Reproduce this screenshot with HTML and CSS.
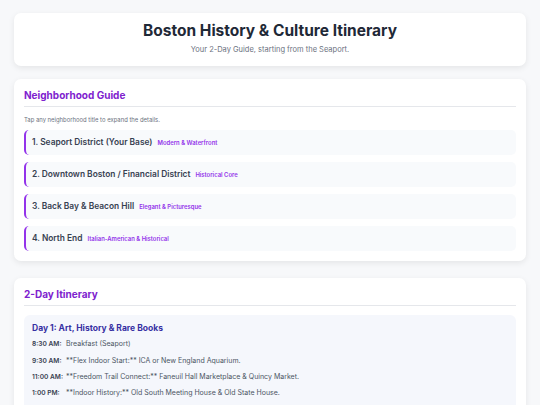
FILE: index.html
```html
<!DOCTYPE html>
<html lang="en">
<head>
    <meta charset="UTF-8">
    <title>Boston History &amp; Culture Itinerary</title>
    <link rel="stylesheet" href="styles.css">
</head>
<body>
    <header class="page-header">
        <h1>Boston History &amp; Culture Itinerary</h1>
        <p>Your 2-Day Guide, starting from the Seaport.</p>
    </header>

    <section class="card">
        <h2 class="card-title">Neighborhood Guide</h2>
        <p class="hint">Tap any neighborhood title to expand the details.</p>
        <div class="hood-list">
            <div class="hood"><span class="hood-name">1. Seaport District (Your Base)</span><span class="hood-tag">Modern &amp; Waterfront</span></div>
            <div class="hood"><span class="hood-name">2. Downtown Boston / Financial District</span><span class="hood-tag">Historical Core</span></div>
            <div class="hood"><span class="hood-name">3. Back Bay &amp; Beacon Hill</span><span class="hood-tag">Elegant &amp; Picturesque</span></div>
            <div class="hood"><span class="hood-name">4. North End</span><span class="hood-tag">Italian-American &amp; Historical</span></div>
        </div>
    </section>

    <section class="card">
        <h2 class="card-title">2-Day Itinerary</h2>
        <div class="day">
            <h3 class="day-title">Day 1: Art, History &amp; Rare Books</h3>
            <ul class="schedule">
                <li><span class="time">8:30 AM:</span><span>Breakfast (Seaport)</span></li>
                <li><span class="time">9:30 AM:</span><span>**Flex Indoor Start:** ICA or New England Aquarium.</span></li>
                <li><span class="time">11:00 AM:</span><span>**Freedom Trail Connect:** Faneuil Hall Marketplace &amp; Quincy Market.</span></li>
                <li><span class="time">1:00 PM:</span><span>**Indoor History:** Old South Meeting House &amp; Old State House.</span></li>
                <li><span class="time">2:30 PM:</span><span>**Literary Gems:** Old Corner Bookstore &amp; Brattle Book Shop.</span></li>
                <li><span class="time">4:30 PM:</span><span>**Harbor Views:** Long Wharf &amp; Christopher Columbus Park.</span></li>
            </ul>
        </div>
    </section>
</body>
</html>
```

FILE: styles.css
```css
/* Base styles */
body {
    font-family: Inter, "Noto Sans", sans-serif;
    margin: 0;
    padding: 13px 14px;
    background-color: #f7f8fa;
    color: #374151;
}

.page-header {
    background: white;
    border-radius: 7px;
    box-shadow: 0 2px 6px rgba(0,0,0,0.08);
    text-align: center;
    padding: 9px 10px 12px;
    margin-bottom: 13px;
}

.page-header h1 {
    font-size: 15.5px;
    font-weight: 700;
    color: #1f2937;
    margin: 0 0 4px 0;
    line-height: 1.2;
}

.page-header p {
    font-size: 7.5px;
    line-height: 9px;
    color: #6b7280;
    margin: 0;
}

.card {
    background: white;
    border-radius: 7px;
    box-shadow: 0 2px 6px rgba(0,0,0,0.08);
    padding: 10px;
    margin-bottom: 17px;
}

.card-title {
    font-size: 10px;
    font-weight: 700;
    color: #7e22ce;
    margin: 0 0 9px 0;
    padding-bottom: 5px;
    border-bottom: 1px solid #e5e7eb;
    line-height: 12px;
}

.hint {
    font-size: 5.9px;
    line-height: 7px;
    color: #6b7280;
    margin: 0 0 7px 0;
}

.hood-list {
    display: flex;
    flex-direction: column;
    gap: 7px;
}

.hood {
    display: flex;
    align-items: center;
    gap: 5px;
    height: 25px;
    padding: 0 6px;
    background: #f8fafc;
    border-left: 2px solid #9333ea;
    border-radius: 5px;
}

.hood-name {
    font-size: 8.4px;
    font-weight: 600;
    color: #374151;
}

.hood-tag {
    font-size: 5.9px;
    font-weight: 600;
    color: #9333ea;
}

.day {
    background: #f5f7fc;
    border-radius: 6px;
    padding: 8px 8px 10px;
}

.day-title {
    font-size: 8.5px;
    line-height: 10.5px;
    font-weight: 700;
    color: #3730a3;
    margin: 0 0 3px 0;
}

.schedule {
    list-style: none;
    margin: 0;
    padding: 0;
}

.schedule li {
    display: flex;
    align-items: baseline;
    font-size: 7px;
    color: #4b5563;
    line-height: 15.4px;
}

.schedule .time {
    flex: 0 0 34px;
    white-space: nowrap;
    font-size: 6.6px;
    font-weight: 600;
    color: #374151;
}
```
